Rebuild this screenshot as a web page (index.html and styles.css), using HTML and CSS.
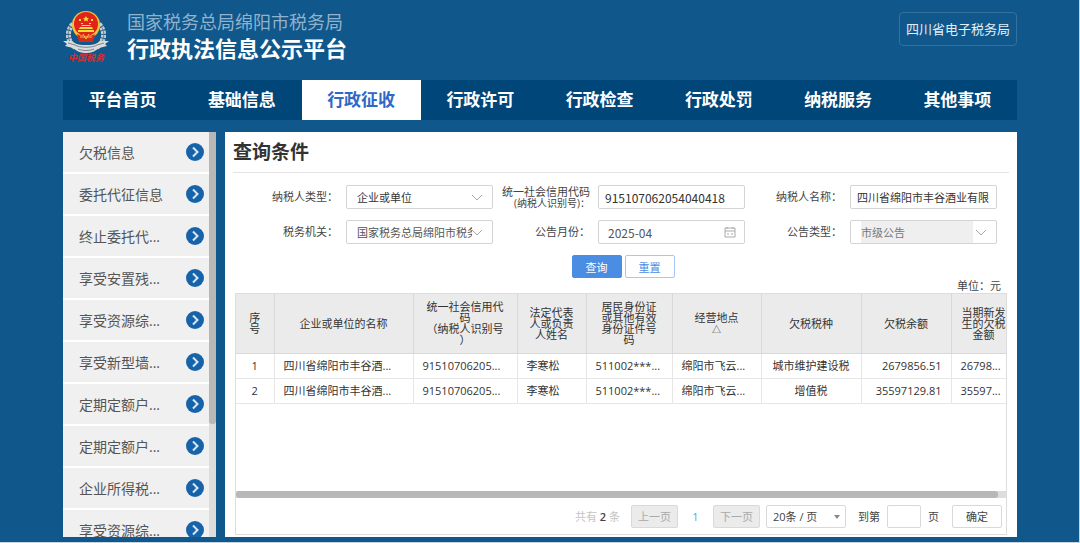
FILE: index.html
```
<!DOCTYPE html>
<html lang="zh-CN">
<head>
    <meta charset="UTF-8">
    <meta name="viewport" content="width=device-width, initial-scale=1.0">
    <title>行政执法信息公示平台</title>
    <link rel="stylesheet" href="styles.css">
</head>
<body>

<header class="header">
    <svg class="logo" viewBox="0 0 46 54" aria-hidden="true">
        <!-- wheat and ribbon -->
        <path d="M10 14C3 21 4 32 13 38M36 14C43 21 42 32 33 38" fill="none" stroke="#c9cdd0" stroke-width="5" stroke-dasharray="3 1"/>
        <path d="M8 16C3 23 5 31 11 37M38 16C43 23 41 31 35 37" fill="none" stroke="#6f7b84" stroke-width="1"/>
        <path d="M0 31l9 0c4 4 9 4 14 4s10 0 14-4l9 0-4 3 2 2-8 2c-3 3-8 5-13 5s-10-2-13-5l-8-2 2-2z" fill="#d9dbdc"/>
        <path d="M5 33l7 2c4 3 18 3 22 0l7-2M15 39c5 2 11 2 16 0" fill="none" stroke="#7d868c" stroke-width="1"/>
        <!-- emblem -->
        <circle cx="23" cy="15" r="14" fill="#f0c33c"/>
        <circle cx="23" cy="14" r="12" fill="#e2231a"/>
        <path d="M23 6l1 2 2 0-1.500 1.500.5 2-2-1-2 1 .5-2L20 8l2 0z" fill="#ffd83a"/>
        <path d="M16 9h2v2h-2zM28 9h2v2h-2zM18 13h2v1h-2zM26 13h2v1h-2z" fill="#ffd83a"/>
        <path d="M15 20h16v2H15zM17 17h12l1 2H16zM19 15h8l1 1h-10z" fill="#ffd83a"/>
        <path d="M14 24c5 3 13 3 18 0l-2 8H16z" fill="#d62a1c"/>
        <path d="M17 27h12M20 24l3 5 3-5" fill="none" stroke="#f0c33c" stroke-width="1"/>
        <text class="logo-text" x="23" y="51" text-anchor="middle">中国税务</text>
    </svg>
    <div class="brand">
        <p class="brand-org">国家税务总局绵阳市税务局</p>
        <h1 class="brand-name">行政执法信息公示平台</h1>
    </div>
    <a class="bureau-link" href="#">四川省电子税务局</a>
</header>

<nav class="nav">
    <a href="#">平台首页</a>
    <a href="#">基础信息</a>
    <a href="#" class="active">行政征收</a>
    <a href="#">行政许可</a>
    <a href="#">行政检查</a>
    <a href="#">行政处罚</a>
    <a href="#">纳税服务</a>
    <a href="#">其他事项</a>
</nav>

<main class="content">
    <!-- Side menu -->
    <aside class="sidebar">
        <div class="menu">
            <a href="#">欠税信息<svg viewBox="0 0 18 18"><circle cx="9" cy="9" r="9"/><path d="M7 4.500l4.500 4.500L7 13.500"/></svg></a>
            <a href="#">委托代征信息<svg viewBox="0 0 18 18"><circle cx="9" cy="9" r="9"/><path d="M7 4.500l4.500 4.500L7 13.500"/></svg></a>
            <a href="#">终止委托代...<svg viewBox="0 0 18 18"><circle cx="9" cy="9" r="9"/><path d="M7 4.500l4.500 4.500L7 13.500"/></svg></a>
            <a href="#">享受安置残...<svg viewBox="0 0 18 18"><circle cx="9" cy="9" r="9"/><path d="M7 4.500l4.500 4.500L7 13.500"/></svg></a>
            <a href="#">享受资源综...<svg viewBox="0 0 18 18"><circle cx="9" cy="9" r="9"/><path d="M7 4.500l4.500 4.500L7 13.500"/></svg></a>
            <a href="#">享受新型墙...<svg viewBox="0 0 18 18"><circle cx="9" cy="9" r="9"/><path d="M7 4.500l4.500 4.500L7 13.500"/></svg></a>
            <a href="#">定期定额户...<svg viewBox="0 0 18 18"><circle cx="9" cy="9" r="9"/><path d="M7 4.500l4.500 4.500L7 13.500"/></svg></a>
            <a href="#">定期定额户...<svg viewBox="0 0 18 18"><circle cx="9" cy="9" r="9"/><path d="M7 4.500l4.500 4.500L7 13.500"/></svg></a>
            <a href="#">企业所得税...<svg viewBox="0 0 18 18"><circle cx="9" cy="9" r="9"/><path d="M7 4.500l4.500 4.500L7 13.500"/></svg></a>
            <a href="#">享受资源综...<svg viewBox="0 0 18 18"><circle cx="9" cy="9" r="9"/><path d="M7 4.500l4.500 4.500L7 13.500"/></svg></a>
        </div>
        <div class="scroll-y"><div class="thumb"></div></div>
    </aside>

    <section class="panel">
        <h2 class="panel-title">查询条件</h2>

        <!-- Query form -->
        <form class="query">
            <div class="form-grid">
                <div class="form-item">
                    <label for="payer-type">纳税人类型：</label>
                    <div class="field">
                        <select id="payer-type"><option>企业或单位</option></select>
                        <svg class="chevron" viewBox="0 0 12 8"><path d="M1 1l5 5 5-5"/></svg>
                    </div>
                </div>
                <div class="form-item">
                    <label for="credit-code">统一社会信用代码<small>(纳税人识别号)：</small></label>
                    <div class="field">
                        <input class="number" type="text" id="credit-code" value="915107062054040418">
                    </div>
                </div>
                <div class="form-item">
                    <label for="payer-name">纳税人名称：</label>
                    <div class="field">
                        <input type="text" id="payer-name" value="四川省绵阳市丰谷酒业有限">
                    </div>
                </div>
                <div class="form-item">
                    <label for="office">税务机关：</label>
                    <div class="field muted">
                        <select id="office"><option>国家税务总局绵阳市税务局</option></select>
                        <svg class="chevron" viewBox="0 0 12 8"><path d="M1 1l5 5 5-5"/></svg>
                    </div>
                </div>
                <div class="form-item">
                    <label for="month">公告月份：</label>
                    <div class="field muted">
                        <input class="number indent" type="text" id="month" value="2025-04">
                        <svg class="calendar" viewBox="0 0 12 12"><path d="M1 2h10v9H1zM1 5h10M3 1v2M9 1v2M3 8h2M7 8h2"/></svg>
                    </div>
                </div>
                <div class="form-item">
                    <label for="notice-type">公告类型：</label>
                    <div class="field">
                        <select id="notice-type" disabled><option>市级公告</option></select>
                        <svg class="chevron" viewBox="0 0 12 8"><path d="M1 1l5 5 5-5"/></svg>
                    </div>
                </div>
            </div>
            <div class="actions">
                <button type="button" class="btn-primary">查询</button>
                <button type="reset" class="btn-plain">重置</button>
            </div>
        </form>

        <p class="unit">单位：元</p>

        <!-- Result list -->
        <div class="result">
            <div class="table-wrap">
                <table class="tax-table">
                    <colgroup>
                        <col class="w-index"><col class="w-name"><col class="w-code"><col class="w-person"><col class="w-id"><col class="w-place"><col class="w-kind"><col class="w-amount"><col class="w-new">
                    </colgroup>
                    <thead>
                        <tr>
                            <th>序<br>号</th>
                            <th>企业或单位的名称</th>
                            <th>统一社会信用代<br>码<br>（纳税人识别号<br>）</th>
                            <th>法定代表<br>人或负责<br>人姓名</th>
                            <th>居民身份证<br>或其他有效<br>身份证件号<br>码</th>
                            <th>经营地点<br><span class="sort">△</span></th>
                            <th>欠税税种</th>
                            <th>欠税余额</th>
                            <th>当期新发<br>生的欠税<br>金额</th>
                        </tr>
                    </thead>
                    <tbody>
                        <tr>
                            <td class="center">1</td>
                            <td>四川省绵阳市丰谷酒...</td>
                            <td>91510706205...</td>
                            <td>李寒松</td>
                            <td>511002***...</td>
                            <td>绵阳市飞云...</td>
                            <td class="center">城市维护建设税</td>
                            <td class="right">2679856.51</td>
                            <td>26798...</td>
                        </tr>
                        <tr>
                            <td class="center">2</td>
                            <td>四川省绵阳市丰谷酒...</td>
                            <td>91510706205...</td>
                            <td>李寒松</td>
                            <td>511002***...</td>
                            <td>绵阳市飞云...</td>
                            <td class="center">增值税</td>
                            <td class="right">35597129.81</td>
                            <td>35597...</td>
                        </tr>
                    </tbody>
                </table>
            </div>
            <div class="scroll-x"><div class="thumb"></div></div>
            <div class="pager">
                <span class="total">共有 <b>2</b> 条</span>
                <button type="button" class="page-btn" disabled>上一页</button>
                <a class="current" href="#">1</a>
                <button type="button" class="page-btn" disabled>下一页</button>
                <div class="page-size">
                    <select aria-label="每页条数"><option>20条 / 页</option></select>
                    <svg class="caret" viewBox="0 0 6 4"><path d="M0 0h6L3 4z"/></svg>
                </div>
                <label class="jump">到第 <input type="text"> 页</label>
                <button type="button" class="ok-btn">确定</button>
            </div>
        </div>
    </section>
</main>

</body>
</html>
```
FILE: styles.css
```
* {
    box-sizing: border-box;
}
body {
    display: flex;
    flex-direction: column;
    height: 100vh;
    margin: 0;
    padding: 0 62px 5px 63px;
    border-right: 1px solid #c5d6e4;
    border-bottom: 1px solid #c5d6e4;
    background-color: #10578b;
    color: #444;
    font-family: "Open Sans", "Noto Sans CJK SC", sans-serif;
    font-size: 11px;
}
a {
    text-decoration: none;
}
input, select, button {
    font-family: inherit;
    font-size: 11px;
    color: inherit;
}
select {
    appearance: none;
}

/* header */
.header {
    display: flex;
    flex: none;
    height: 80px;
    padding-top: 10px;
}
.logo {
    width: 46px;
    height: 54px;
}
.logo-text {
    fill: #dc2c2c;
    font-size: 9px;
    font-weight: bold;
    font-style: italic;
}
.brand {
    flex: 1;
    margin-left: 18px;
}
.brand-org {
    margin: 0;
    color: #8fb2cd;
    font-size: 18px;
    line-height: 24px;
}
.brand-name {
    margin: 0;
    color: #fff;
    font-size: 22px;
    line-height: 28px;
}
.bureau-link {
    height: 34px;
    margin-top: 2px;
    padding: 0 6px;
    border: 1px solid #34719f;
    border-radius: 4px;
    color: #e4edf4;
    font-size: 13px;
    line-height: 32px;
}

/* navigation */
.nav {
    display: grid;
    grid-template-columns: repeat(8, 1fr);
    flex: none;
    height: 40px;
    margin-bottom: 12px;
    background-color: #004679;
}
.nav a {
    color: #fff;
    font-size: 17px;
    font-weight: bold;
    line-height: 40px;
    text-align: center;
}
.nav .active {
    background-color: #fff;
    color: #2f68c5;
}

.content {
    display: grid;
    grid-template-columns: 153px minmax(0, 1fr);
    grid-template-rows: minmax(0, 1fr);
    gap: 9px;
    flex: 1;
    min-height: 0;
}

/* side menu */
.sidebar {
    display: flex;
    overflow: hidden;
    background-color: #fff;
}
.menu {
    display: flex;
    flex-direction: column;
    flex: 1;
    gap: 2px;
}
.menu a {
    display: flex;
    flex: none;
    align-items: center;
    justify-content: space-between;
    height: 40px;
    padding: 0 5px 0 16px;
    background-color: #f0f0f0;
    color: #555;
    font-size: 14px;
}
.menu svg {
    width: 18px;
    height: 18px;
    fill: #1763aa;
}
.menu path {
    fill: none;
    stroke: #d9e7f3;
    stroke-width: 2;
}
.scroll-y {
    width: 7px;
    background-color: #ddd;
}
.scroll-y .thumb {
    height: 72%;
    border-radius: 0 0 3px 3px;
    background-color: #b8b8b8;
}

/* query panel */
.panel {
    display: flex;
    flex-direction: column;
    padding: 0 8px 2px;
    background-color: #fff;
}
.panel-title {
    margin: 0;
    border-bottom: 1px solid #e3e3e3;
    color: #333;
    font-size: 19px;
    line-height: 40px;
}
.query {
    padding: 12px 12px 0 16px;
}
.form-grid {
    display: grid;
    grid-template-columns: repeat(3, minmax(0, 1fr));
    gap: 11px 8px;
}
.form-item {
    display: flex;
    align-items: center;
    gap: 8px;
    height: 24px;
}
.form-item label {
    flex: none;
    width: 89px;
    line-height: 12px;
    text-align: right;
}
.form-item small {
    display: block;
    font-size: 10px;
    line-height: 11px;
}
.field {
    position: relative;
    display: flex;
    flex: 1;
    min-width: 0;
    height: 24px;
    border: 1px solid #d4d4d4;
    border-radius: 2px;
    color: #333;
}
.field.muted {
    color: #555;
}
.field input {
    width: 100%;
    min-width: 0;
    padding: 0 6px;
    border: none;
    background: none;
}
.field .indent {
    padding-left: 9px;
}
.field .number {
    font-family: "Noto Sans CJK SC", sans-serif;
    font-size: 12px;
}
.field select {
    flex: 1;
    min-width: 0;
    margin: 0 20px 0 10px;
    padding: 0;
    border: none;
    background: none;
}
.field select:disabled {
    margin-right: 23px;
    background-color: #efefef;
    color: #777;
    opacity: 1;
}
.chevron, .calendar {
    position: absolute;
    right: 9px;
    top: 8px;
    width: 12px;
    height: 8px;
    fill: none;
    stroke: #aaa;
}
.calendar {
    right: 8px;
    top: 5px;
    height: 12px;
}
.actions {
    display: flex;
    justify-content: center;
    gap: 3px;
    margin-top: 11px;
}
.actions button {
    width: 50px;
    height: 23px;
    padding: 0;
    border: 1px solid #4a8de2;
    border-radius: 2px;
}
.btn-primary {
    background-color: #4a8de2;
    color: #fff;
}
.actions .btn-plain {
    border-color: #a5c8f5;
    background-color: #fff;
    color: #4a8de2;
}
.unit {
    margin: 0;
    padding-right: 8px;
    line-height: 15px;
    text-align: right;
}

/* result table */
.result {
    display: flex;
    flex-direction: column;
    flex: 1;
    min-height: 0;
    margin: 0 2px;
    border: 1px solid #ddd;
}
.table-wrap {
    flex: 1;
    min-height: 0;
    overflow: hidden;
}
.tax-table {
    width: 100%;
    min-width: 780px;
    table-layout: fixed;
    border-collapse: collapse;
    color: #333;
}
.w-index { width: 38px; }
.w-name { width: 139px; }
.w-code { width: 104px; }
.w-person { width: 69px; }
.w-id { width: 86px; }
.w-place { width: 89px; }
.w-kind { width: 100px; }
.w-amount { width: 90px; }
.w-new { width: 65px; }
.tax-table th {
    height: 59px;
    padding: 0;
    border-right: 1px solid #d9d9d9;
    border-bottom: 1px solid #d9d9d9;
    background-color: #ebebeb;
    font-weight: normal;
    line-height: 11px;
}
.sort {
    font-size: 9px;
}
.tax-table td {
    height: 25px;
    padding: 0 9px;
    border-right: 1px solid #e6e6e6;
    border-bottom: 1px solid #e6e6e6;
    line-height: 16px;
    white-space: nowrap;
}
.tax-table .center {
    text-align: center;
}
.tax-table .right {
    text-align: right;
}
.scroll-x {
    flex: none;
    height: 7px;
    background-color: #ddd;
}
.scroll-x .thumb {
    width: 99%;
    height: 7px;
    border-radius: 3px;
    background-color: #b8b8b8;
}

/* pagination */
.pager {
    display: flex;
    flex: none;
    align-items: center;
    justify-content: flex-end;
    height: 36px;
    padding-right: 4px;
}
.pager button, .pager select, .pager input {
    height: 23px;
    padding: 0;
    border: 1px solid #d9d9d9;
    border-radius: 2px;
    background-color: #fff;
}
.total {
    margin-right: 11px;
    color: #c4c4c4;
}
.total b {
    color: #444;
    font-weight: 600;
}
.pager .page-btn {
    width: 47px;
    background-color: #ebebeb;
    color: #aaa;
}
.current {
    width: 35px;
    color: #5a9cf0;
    text-align: center;
}
.page-size {
    position: relative;
    margin: 0 12px 0 6px;
}
.pager .page-size select {
    width: 80px;
    padding-left: 6px;
}
.caret {
    position: absolute;
    right: 6px;
    top: 10px;
    width: 6px;
    height: 4px;
    fill: #888;
}
.jump {
    display: flex;
    align-items: center;
    gap: 7px;
    margin-right: 13px;
}
.jump input {
    width: 34px;
}
.pager .ok-btn {
    width: 50px;
}
```
